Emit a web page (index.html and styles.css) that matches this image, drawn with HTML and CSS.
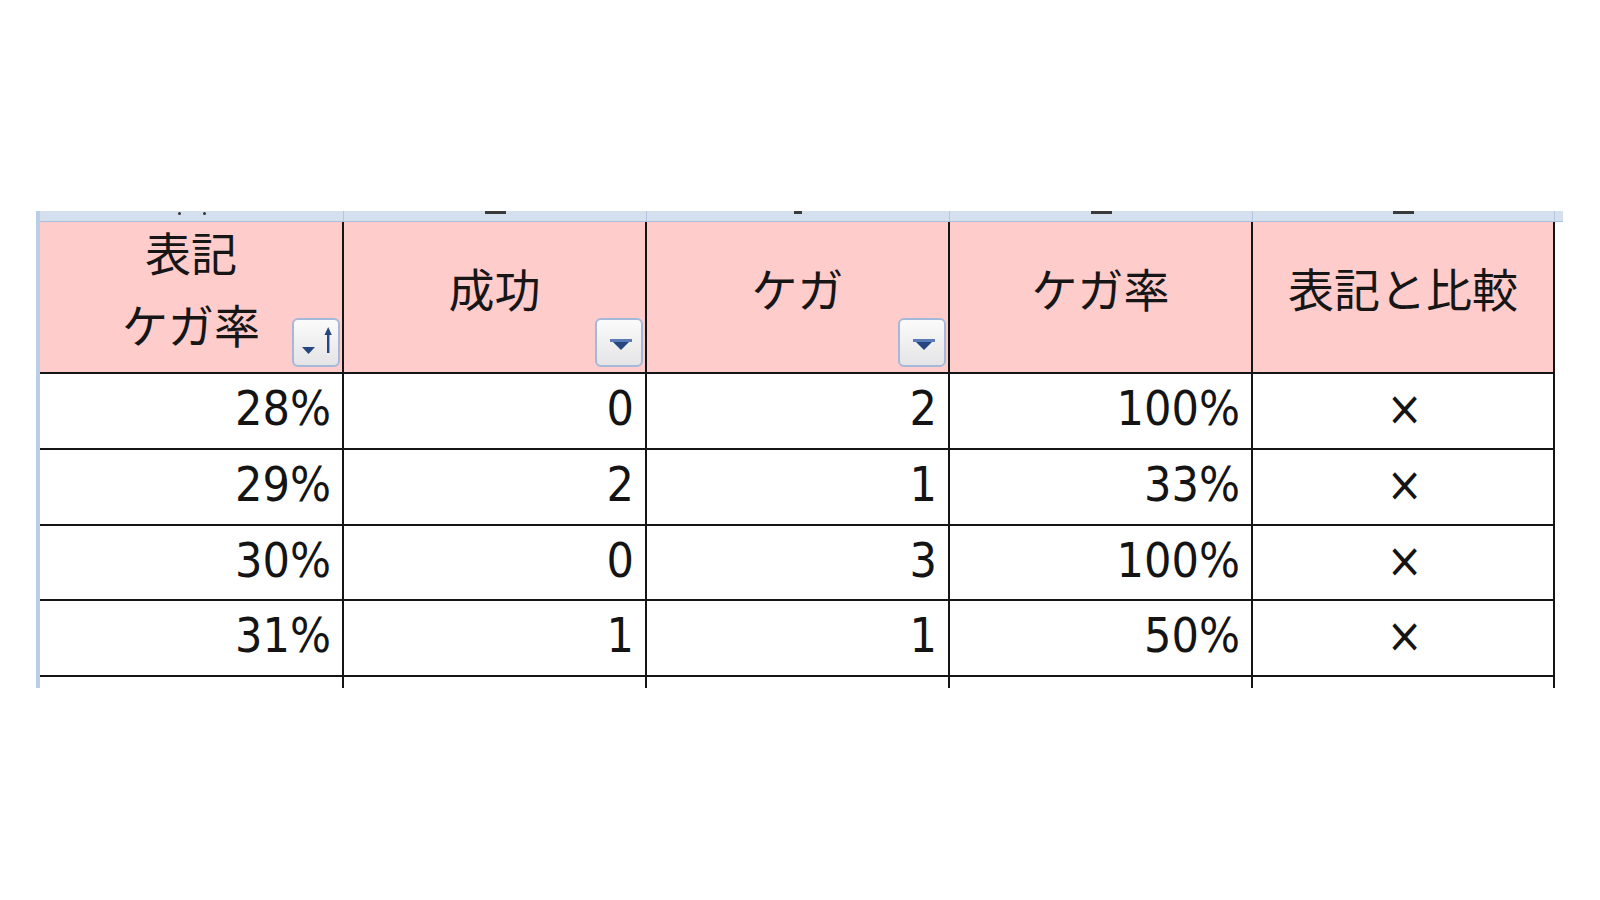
FILE: index.html
```html
<!DOCTYPE html>
<html lang="ja">
<head>
<meta charset="utf-8">
<title>ケガ率</title>
<link rel="stylesheet" href="styles.css">
</head>
<body>
<div class="sheet">
  <div class="rowbar"></div>
  <div class="main">
    <div class="strip">
      <div class="scol"><span class="dot"></span><span class="dot"></span></div>
      <div class="scol"><span class="dash"></span></div>
      <div class="scol"><span class="dash short"></span></div>
      <div class="scol"><span class="dash"></span></div>
      <div class="scol"><span class="dash"></span></div>
      <div class="scol end"></div>
    </div>
    <div class="table">
      <div class="th">
        <div class="ttl">表記<br>ケガ率</div>
        <div class="fbtn">
          <svg viewBox="0 0 44 45" width="44" height="45"><polygon points="8,27 21,27 14.5,34" fill="#27457f"/><rect x="33" y="13" width="2.4" height="20" fill="#27457f"/><polygon points="30.5,15 37.8,15 34.2,7" fill="#27457f"/></svg>
        </div>
      </div>
      <div class="th">
        <div class="ttl">成功</div>
        <div class="fbtn">
          <svg viewBox="0 0 44 45" width="44" height="45"><polygon points="13,19 35,19 24,30" fill="#27457f"/><rect x="13" y="19" width="22" height="3" fill="#5a7bb6"/></svg>
        </div>
      </div>
      <div class="th">
        <div class="ttl">ケガ</div>
        <div class="fbtn">
          <svg viewBox="0 0 44 45" width="44" height="45"><polygon points="13,19 35,19 24,30" fill="#27457f"/><rect x="13" y="19" width="22" height="3" fill="#5a7bb6"/></svg>
        </div>
      </div>
      <div class="th"><div class="ttl">ケガ率</div></div>
      <div class="th"><div class="ttl">表記と比較</div></div>

      <div class="td r1">28%</div><div class="td r1">0</div><div class="td r1">2</div><div class="td r1">100%</div><div class="td r1 mark">×</div>
      <div class="td r2">29%</div><div class="td r2">2</div><div class="td r2">1</div><div class="td r2">33%</div><div class="td r2 mark">×</div>
      <div class="td r3">30%</div><div class="td r3">0</div><div class="td r3">3</div><div class="td r3">100%</div><div class="td r3 mark">×</div>
      <div class="td r4">31%</div><div class="td r4">1</div><div class="td r4">1</div><div class="td r4">50%</div><div class="td r4 mark">×</div>

      <div class="tail"></div><div class="tail"></div><div class="tail"></div><div class="tail"></div><div class="tail"></div>
    </div>
  </div>
</div>
</body>
</html>
```
FILE: styles.css
```css
html, body {
  margin: 0;
  padding: 0;
  background: #ffffff;
}

.sheet {
  display: flex;
  margin: 211px 0 0 36px;
}

.rowbar {
  width: 4px;
  height: 477px;
  background: #bacee6;
}

.main {
  display: flex;
  flex-direction: column;
}

.strip {
  display: grid;
  grid-template-columns: 304px 303px 303px 303px 302px 8px;
  height: 11px;
  box-sizing: border-box;
  background: #d5e0ef;
  border-bottom: 1px solid #a9bfdc;
}

.scol {
  display: flex;
  justify-content: center;
  align-items: flex-start;
  gap: 22px;
  border-right: 1px solid #b3c6df;
  box-sizing: border-box;
}

.scol.end {
  border-right: none;
}

.dot {
  width: 3px;
  height: 3px;
  margin-top: 1px;
  background: #333;
  border-radius: 50%;
}

.dash {
  width: 21px;
  height: 3px;
  margin-top: 0;
  background: #3a3a3a;
}

.dash.short {
  width: 8px;
}

.table {
  display: grid;
  grid-template-columns: 304px 303px 303px 303px 302px;
  grid-template-rows: 152px 76px 76px 75px 76px 11px;
}

.th {
  position: relative;
  background: #ffcccc;
  border-right: 2px solid #151515;
  border-bottom: 2px solid #151515;
  box-sizing: border-box;
  display: flex;
  align-items: center;
  justify-content: center;
  padding-bottom: 21px;
}

.ttl {
  font-family: "Noto Sans CJK JP", "Noto Sans", sans-serif;
  font-size: 46px;
  line-height: 72px;
  color: #161616;
  text-align: center;
}

.fbtn {
  position: absolute;
  right: 2px;
  bottom: 5px;
  width: 48px;
  height: 49px;
  box-sizing: border-box;
  border: 2px solid #a4b9da;
  border-radius: 6px;
  background: linear-gradient(#fbfbfb, #e4e4e6);
}

.fbtn svg {
  display: block;
}

.td {
  border-right: 2px solid #151515;
  border-bottom: 2px solid #151515;
  box-sizing: border-box;
  font-family: "DejaVu Sans Condensed", "DejaVu Sans", sans-serif;
  font-stretch: condensed;
  font-size: 48px;
  line-height: 68px;
  color: #141414;
  text-align: right;
  padding-right: 11px;
  background: #ffffff;
}

.td.mark {
  text-align: center;
  padding-right: 0;
  padding-left: 3px;
}

.tail {
  border-right: 2px solid #151515;
  box-sizing: border-box;
}
```
